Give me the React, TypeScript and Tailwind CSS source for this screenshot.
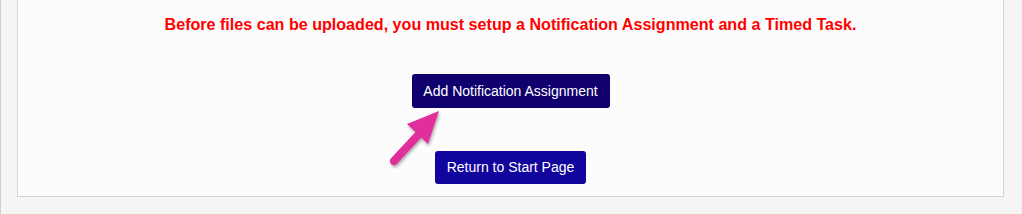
export default function App() {
    return (
        <div className="h-[214px] w-[1022px] bg-[#f5f5f5] border-l border-[#d0d0d0] pl-4 font-['Liberation_Sans',Arial,sans-serif]">
            <div className="relative w-[987px] h-[197px] bg-[#fcfcfc] border-x border-b border-[#d3d3d3] flex flex-col items-center">
                <p className="mt-[14px] text-[16.1px] leading-[20px] font-bold text-[#ff0000]">
                    Before files can be uploaded, you must setup a Notification Assignment and a Timed Task.
                </p>
                <button className="mt-[40px] w-[198px] h-[34px] rounded-[3px] bg-[#0f006e] text-white text-[14px]">
                    Add Notification Assignment
                </button>
                <button className="mt-[43px] w-[151px] h-[33px] rounded-[3px] bg-[#12059e] text-white text-[14px]">
                    Return to Start Page
                </button>

                {/* arrow pointing at the first button */}
                <svg
                    className="absolute left-[366px] top-[104px]"
                    width="80"
                    height="70"
                    viewBox="0 0 80 70"
                >
                    <defs>
                        <filter id="sh" x="-20%" y="-20%" width="140%" height="140%">
                            <feDropShadow dx="1" dy="2" stdDeviation="1.5" floodColor="#000" floodOpacity="0.35" />
                        </filter>
                    </defs>
                    <g filter="url(#sh)">
                        <line x1="10" y1="57" x2="36" y2="29" stroke="#e02d9b" strokeWidth="8" strokeLinecap="round" />
                        <polygon points="55,7 23,20 44,40" fill="#e02d9b" />
                    </g>
                </svg>
            </div>
        </div>
    );
}
